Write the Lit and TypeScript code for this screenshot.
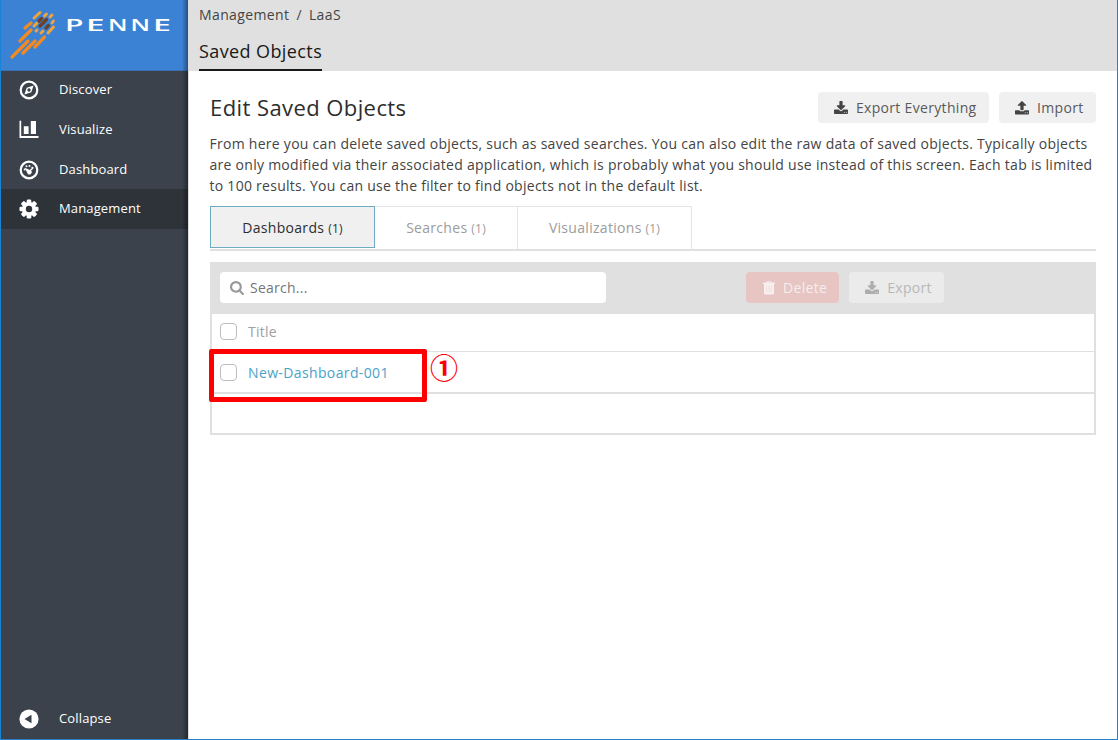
import { LitElement, html, css, svg } from "lit";
import { customElement, property } from "lit/decorators.js";

const paths = {
  download: "M1280 1344q0-26-19-45t-45-19-45 19-19 45 19 45 45 19 45-19 19-45zm256 0q0-26-19-45t-45-19-45 19-19 45 19 45 45 19 45-19 19-45zm128-224v320q0 40-28 68t-68 28h-1472q-40 0-68-28t-28-68v-320q0-40 28-68t68-28h465l135 136q58 56 136 56t136-56l136-136h464q40 0 68 28t28 68zm-325-569q17 41-14 70l-448 448q-18 19-45 19t-45-19l-448-448q-31-29-14-70 17-39 59-39h256v-448q0-26 19-45t45-19h256q26 0 45 19t19 45v448h256q42 0 59 39z",
  upload: "M1280 1408q0-26-19-45t-45-19-45 19-19 45 19 45 45 19 45-19 19-45zm256 0q0-26-19-45t-45-19-45 19-19 45 19 45 45 19 45-19 19-45zm128-224v320q0 40-28 68t-68 28h-1472q-40 0-68-28t-28-68v-320q0-40 28-68t68-28h427q21 56 70.500 92t110.500 36h256q61 0 110.500-36t70.500-92h427q40 0 68 28t28 68zm-325-648q-17 40-59 40h-256v448q0 26-19 45t-45 19h-256q-26 0-45-19t-19-45v-448h-256q-42 0-59-40-17-39 14-69l448-448q18-19 45-19t45 19l448 448q31 30 14 69z",
  search: "M1152 704q0-185-131.500-316.500t-316.500-131.500-316.500 131.500-131.500 316.500 131.500 316.500 316.500 131.500 316.500-131.500 131.500-316.500zm512 832q0 52-38 90t-90 38q-54 0-90-38l-343-342q-179 124-399 124-143 0-273.500-55.500t-225-150-150-225-55.500-273.500 55.500-273.500 150-225 225-150 273.500-55.500 273.500 55.500 225 150 150 225 55.500 273.500q0 220-124 399l343 343q37 37 37 90z",
};

const glyphs: Record<string, unknown> = {
  download: svg`<path transform="scale(.0084)" d=${paths.download}/>`,
  upload: svg`<path transform="scale(.0084)" d=${paths.upload}/>`,
  search: svg`<path transform="scale(.0084)" d=${paths.search}/>`,
  trash: svg`<path d="M4.500 1.500L5.200 .2h3.600l.7 1.300H13v1.500h-1V12.200a1.300 1.300 0 0 1-1.300 1.300H3.300A1.300 1.300 0 0 1 2 12.200V3H1V1.500zM5.500 1.500h3L8.200 1H5.800z"/><path d="M4.700 4.800v6.500M7 4.800v6.500M9.300 4.800v6.500" stroke="#e6c5c3" stroke-width=".4"/>`,
};

const navGlyphs: Record<string, unknown> = {
  Discover: svg`<circle cx="10" cy="10" r="8.300" fill="none" stroke="#fff" stroke-width="2.200"/><path fill-rule="evenodd" d="M14.600 5.400L12.300 12.300L5.400 14.600L7.700 7.700zM10 8.300a1.700 1.700 0 1 0 0 3.400a1.700 1.700 0 0 0 0-3.400z"/>`,
  Visualize: svg`<path d="M.5 .7h1.700v15.300h17.300v1.900H.5zM4.800 6.200h4.800v7.800H4.800zM11.800 1h5.200v13h-5.200z"/>`,
  Dashboard: svg`<circle cx="10" cy="10" r="8.300" fill="none" stroke="#fff" stroke-width="2.200"/><path d="M5.700 7.700L11.600 10.300A2.200 2.200 0 1 1 8.600 13.400z"/><circle cx="7.500" cy="6.300" r="1"/><circle cx="10.500" cy="5.900" r="1"/><circle cx="13.400" cy="7.800" r="1.100"/><circle cx="5.700" cy="9.500" r="1"/><path d="M10 11.500L13.800 8.200" stroke="#fff" stroke-width="1.200"/>`,
  Management: svg`<g>${[0, 45, 90, 135].map((a) => svg`<rect x="7.700" y=".5" width="4.600" height="19" rx="1.200" transform="rotate(${a} 10 10)"/>`)}<circle cx="10" cy="10" r="7"/></g><circle class="hole" cx="10" cy="10" r="3.200"/>`,
  Collapse: svg`<circle cx="10" cy="10" r="9.600"/><path d="M5.500 10L12.500 5.700v8.600z" fill="#3b424b"/>`,
};

@customElement("fa-icon")
class FaIcon extends LitElement {
  @property() name = "";
  static styles = css`
    :host { display: block; width: 14px; height: 14px; flex: none; }
    svg { display: block; fill: currentColor; overflow: visible; }
  `;
  render() {
    return html`<svg width="14" height="14" viewBox="0 0 14 14">${glyphs[this.name]}</svg>`;
  }
}

@customElement("side-nav")
class SideNav extends LitElement {
  static styles = css`
    :host { display: flex; flex-direction: column; width: 188px; box-sizing: border-box; background: #3b424b; position: relative; border-left: 1px solid #1b83d6; }
    .shade { position: absolute; right: 0; top: 0; bottom: 0; width: 6px; background: linear-gradient(90deg, rgba(0,0,0,0), rgba(0,0,0,.38)); }
    .brand { height: 70.300px; background: #3c82d4; box-shadow: 0 1px #3971b4; }
    .brand svg { display: block; }
    .wordmark { font: 600 16px "Open Sans", sans-serif; fill: #fff; }
    .item { display: flex; align-items: center; height: 39.700px; padding-left: 18px; gap: 20px; color: #fff; font-size: 13px; letter-spacing: .14px; }
    .item.on { background: #2e333a; }
    .item svg { fill: #fff; display: block; }
    .item .hole { fill: #2e333a; }
    .fill { flex: 1; }
  `;
  item(name: string) {
    return html`<div class="item ${name === "Management" ? "on" : ""}">
      <svg width="20" height="20" viewBox="0 0 20 20">${navGlyphs[name]}</svg><span>${name}</span>
    </div>`;
  }
  render() {
    const bars = [
      [12, 57, 28, 41], [23, 53, 35, 41], [35, 47, 44.5, 37], [20, 41, 31, 30], [25, 28, 31, 23],
    ];
    const light = [[34, 18, 40, 12.5], [44.500, 16, 46.500, 14], [50, 17, 52, 15], [52, 23, 53.500, 21], [34, 26, 37, 23], [36, 31, 37, 30], [41, 33, 43, 31], [48, 33, 53.500, 27]];
    const dark = [[39, 21, 41.500, 18.500], [40, 26, 46.500, 19.500], [46, 28, 48.500, 25.500]];
    const draw = (list: number[][], color: string, w: number) =>
      list.map(([a, b, c, d]) => svg`<path d="M${a} ${b}L${c} ${d}" stroke=${color} stroke-width=${w} stroke-linecap="round"/>`);
    return html`
      <div class="brand">
        <svg width="187" height="70" viewBox="1 0 187 70">
          ${draw(bars, "#f08a24", 3.300)}${draw(light, "#f2a43c", 2.900)}${draw(dark, "#6b4128", 3.300)}
          ${[["P", 65, 18.5], ["E", 86, 18.5], ["N", 108, 19.5], ["N", 130.5, 19.5], ["E", 153, 18]].map(([c, x, w]) =>
            svg`<text class="wordmark" x=${x} y="31" textLength=${w} lengthAdjust="spacingAndGlyphs">${c}</text>`)}
        </svg>
      </div>
      ${["Discover", "Visualize", "Dashboard", "Management"].map((n) => this.item(n))}
      <div class="fill"></div>
      ${this.item("Collapse")}
      <div class="shade"></div>
    `;
  }
}

@customElement("app-root")
class AppRoot extends LitElement {
  static styles = css`
    :host { display: flex; box-sizing: border-box; width: 1118px; height: 740px; overflow: hidden; background: #fff; font: 14px/1.5 "Open Sans", sans-serif; color: #444; border: solid #2b7fc8; border-width: 0 1px 1px 0; }
    .main { flex: 1; min-width: 0; border-left: 1px solid #ddd; }
    header { height: 70.500px; box-sizing: border-box; background: #e0e0e0; padding: 4px 10px 0; display: flex; flex-direction: column; align-items: flex-start; }
    .crumbs { display: flex; gap: 7px; line-height: 21px; color: #444; letter-spacing: .38px; }
    .title { margin-top: 9px; height: 37px; box-sizing: border-box; font-size: 18px; line-height: 35px; border-bottom: 2px solid #191919; color: #191919; letter-spacing: .4px; }
    .body { padding: 21px 21px 0 21px; width: 886px; }
    .head { display: flex; align-items: center; gap: 10px; height: 32px; }
    h1 { margin: -2px 0 0; flex: 1; font-size: 22px; font-weight: 400; line-height: 32px; color: #2d2d2d; letter-spacing: .42px; }
    .btn { display: flex; align-items: center; gap: 7px; height: 31px; box-sizing: border-box; padding: 0 12px 0 16px; border-radius: 4px; background: #f0f0f0; color: #5a5a5a; letter-spacing: .32px; }
    .head .btn { gap: 8px; padding-right: 12.500px; }
    .btn fa-icon { color: #444; }
    .intro { margin: 9px -4px 0 -.5px; line-height: 21px; letter-spacing: .272px; }
    .tabs { display: flex; margin-top: 10px; height: 45px; box-sizing: border-box; border-bottom: 2px solid #e0e0e0; }
    .tab { box-sizing: border-box; height: 43px; border: 1px solid #e4e4e4; border-left: 0; border-bottom: 0; color: #9c9c9c; line-height: 42px; text-align: center; letter-spacing: .3px; }
    .tab small { font-size: 12px; letter-spacing: .2px; }
    .tab.on { height: 42px; border: 1px solid #6eadc1; background: #f0f0f0; color: #2d2d2d; }
    .t1 { width: 165px; } .t2 { width: 143px; } .t3 { width: 174px; }
    .panel { margin-top: 11px; border: 2px solid #e0e0e0; border-top: 0; height: 173px; box-sizing: border-box; position: relative; }
    .bar { height: 52px; background: #e0e0e0; margin: 0 -2px; padding: 0 10px; display: flex; align-items: center; box-sizing: border-box; }
    .search { width: 386px; height: 31px; box-sizing: border-box; background: #fff; border-radius: 4px; display: flex; align-items: center; padding-left: 10px; gap: 6px; color: #757575; margin-right: 140px; letter-spacing: .25px; }
    .search fa-icon { color: #999; }
    .bar .btn { margin-right: 10px; }
    .btn.del { background: #e6c5c3; color: #f5eeed; }
    .btn.del fa-icon { color: #f8f0f0; }
    .btn.exp { background: #ebebeb; color: #b8b8b8; gap: 8px; padding-right: 12.500px; }
    .btn.exp fa-icon { color: #adadad; }
    .row { display: flex; align-items: center; gap: 11px; padding-left: 8px; box-sizing: border-box; }
    .hd { height: 38px; padding-bottom: 1px; border-bottom: 1px solid #e0e0e0; color: #a0a0a0; letter-spacing: .25px; }
    .item { height: 42px; padding-top: 2px; border-bottom: 2px solid #e0e0e0; color: #4aa3c7; letter-spacing: .37px; }
    .check { width: 17px; height: 17px; box-sizing: border-box; border: 1px solid #bdbdbd; border-radius: 4px; background: #fff; }
    .mark { position: absolute; left: -3px; top: 87px; width: 218px; height: 53px; box-sizing: border-box; border: 5px solid #f00; border-radius: 2px; }
    .num { position: absolute; left: 218px; top: 86px; color: #f00; font: 700 28px/38px "Noto Sans CJK KR", sans-serif; }
  `;
  render() {
    return html`
      <side-nav></side-nav>
      <div class="main">
        <header>
          <div class="crumbs"><span>Management</span><span>/</span><span>LaaS</span></div>
          <div class="title">Saved Objects</div>
        </header>
        <div class="body">
          <div class="head">
            <h1>Edit Saved Objects</h1>
            <div class="btn"><fa-icon name="download"></fa-icon>Export Everything</div>
            <div class="btn"><fa-icon name="upload"></fa-icon>Import</div>
          </div>
          <p class="intro">From here you can delete saved objects, such as saved searches. You can also edit the raw data of saved objects. Typically objects are only modified via their associated application, which is probably what you should use instead of this screen. Each tab is limited to 100 results. You can use the filter to find objects not in the default list.</p>
          <div class="tabs">
            <div class="tab t1 on">Dashboards <small>(1)</small></div>
            <div class="tab t2">Searches <small>(1)</small></div>
            <div class="tab t3">Visualizations <small>(1)</small></div>
          </div>
          <div class="panel">
            <div class="bar">
              <div class="search"><fa-icon name="search"></fa-icon>Search...</div>
              <div class="btn del"><fa-icon name="trash"></fa-icon>Delete</div>
              <div class="btn exp"><fa-icon name="download"></fa-icon>Export</div>
            </div>
            <div class="row hd"><span class="check"></span>Title</div>
            <div class="row item"><span class="check"></span>New-Dashboard-001</div>
            <div class="mark"></div>
            <div class="num">①</div>
          </div>
        </div>
      </div>
    `;
  }
}
